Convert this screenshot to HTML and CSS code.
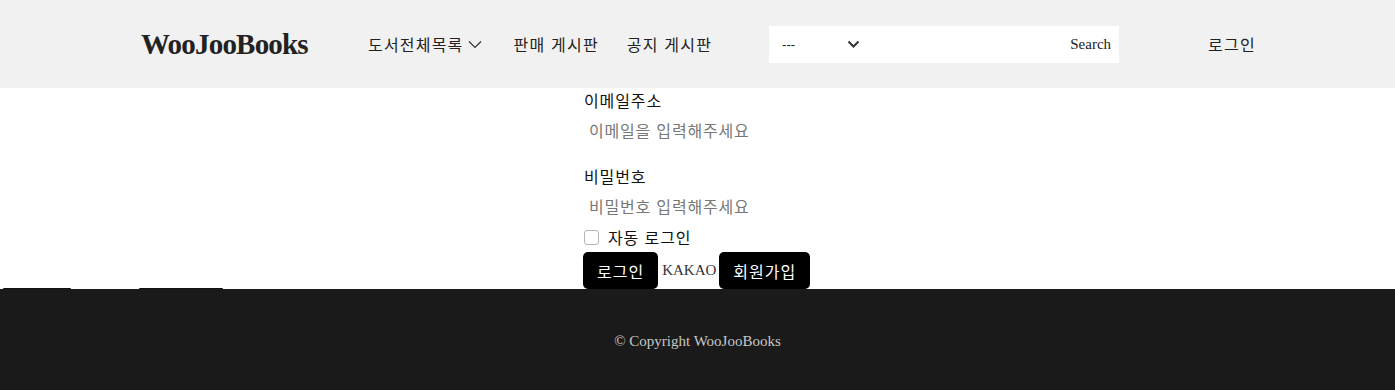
FILE: index.html
```html
<!DOCTYPE html>
<html lang="ko">
<head>
<meta charset="utf-8">
<title>WooJooBooks</title>
<link rel="stylesheet" href="styles.css">
</head>
<body>
<header class="header">
  <a class="logo" href="#">WooJooBooks</a>
  <nav class="nav">
    <a class="nav-item" href="#">도서전체목록
      <svg class="nav-chev" width="14" height="9" viewBox="0 0 14 9"><path d="M1 1.5 L7 7.5 L13 1.5" fill="none" stroke="#333" stroke-width="1.2"/></svg>
    </a>
    <a class="nav-item" href="#">판매 게시판</a>
    <a class="nav-item" href="#">공지 게시판</a>
  </nav>
  <form class="search">
    <div class="search-select">
      <span>---</span>
      <svg width="13" height="9" viewBox="0 0 13 9"><path d="M1.5 1.5 L6.5 6.5 L11.5 1.5" fill="none" stroke="#333" stroke-width="2"/></svg>
    </div>
    <input class="search-input" type="text">
    <button class="search-btn" type="button">Search</button>
  </form>
  <a class="login-link" href="#">로그인</a>
</header>

<main class="main">
  <form class="login-form">
    <label class="field-label">이메일주소</label>
    <input class="field-input" type="text" placeholder="이메일을 입력해주세요">
    <label class="field-label second">비밀번호</label>
    <input class="field-input" type="password" placeholder="비밀번호 입력해주세요">
    <label class="remember"><span class="check"></span>자동 로그인</label>
    <div class="actions">
      <button class="btn" type="button">로그인</button>
      <span class="kakao">KAKAO</span>
      <button class="btn" type="button">회원가입</button>
    </div>
  </form>
</main>
<div class="stray">
  <span class="stray-a"></span>
  <span class="stray-b"></span>
</div>

<footer class="footer">
  <p>© Copyright WooJooBooks</p>
</footer>
</body>
</html>
```

FILE: styles.css
```css
* { box-sizing: border-box; }
html, body { margin: 0; padding: 0; }
body {
  font-family: "Noto Sans CJK KR", "Noto Sans", sans-serif;
  color: #222;
  background: #fff;
  width: 1395px;
  height: 390px;
  overflow: hidden;
}
a { color: inherit; text-decoration: none; }

.header {
  height: 88px;
  background: #f1f1f1;
  display: flex;
  align-items: center;
  padding-left: 141px;
}
.logo {
  font-family: "Liberation Serif", serif;
  font-weight: bold;
  font-size: 29px;
  color: #222;
  letter-spacing: -0.8px;
  width: 167px;
  white-space: nowrap;
}
.nav {
  display: flex;
  align-items: center;
  margin-left: 60px;
  font-size: 16px;
  letter-spacing: 1.2px;
  color: #222;
}
.nav-item { display: flex; align-items: center; line-height: 24px; }
.nav-item + .nav-item { margin-left: 28px; }
.nav-item:nth-child(2) { margin-left: 32px; }
.nav-chev { margin-left: 4px; margin-top: 1px; }

.search {
  margin-left: 57px;
  width: 350px;
  height: 37px;
  background: #fff;
  display: flex;
  align-items: center;
}
.search-select {
  width: 91px;
  display: flex;
  align-items: center;
  justify-content: space-between;
  padding-left: 13px;
  font-family: "Liberation Sans", sans-serif;
  font-size: 13px;
  color: #222;
}
.search-input {
  flex: 1;
  border: 0;
  outline: none;
  background: transparent;
  height: 37px;
}
.search-btn {
  border: 0;
  background: transparent;
  font-family: "Liberation Serif", serif;
  font-size: 15px;
  color: #222;
  padding: 0 8px 0 0;
  cursor: pointer;
}
.login-link {
  margin-left: 89px;
  font-size: 16px;
  letter-spacing: 1.2px;
  color: #222;
}

.main {
  height: 201px;
  display: flex;
  justify-content: center;
}
.login-form {
  width: 228px;
  margin-left: 1px;
  display: flex;
  flex-direction: column;
  align-items: flex-start;
  letter-spacing: 0.9px;
}
.field-label {
  font-size: 16px;
  line-height: 24px;
  color: #111;
}
.field-label.second { margin-top: 19px; }
.field-input {
  border: 0;
  outline: none;
  height: 30px;
  margin-top: 3px;
  padding: 0 5px;
  font-family: "Noto Sans CJK KR", sans-serif;
  font-size: 16px;
  letter-spacing: 0.8px;
  width: 228px;
  background: transparent;
}
.field-input::placeholder { color: #777; }
.remember {
  display: flex;
  align-items: center;
  height: 20px;
  margin-top: 6px;
  font-size: 16px;
  color: #111;
}
.check {
  width: 15px;
  height: 15px;
  border: 1px solid #b5b5b5;
  border-radius: 3px;
  margin-right: 9px;
  background: #fff;
}
.actions {
  display: flex;
  align-items: center;
  margin-top: 5px;
  margin-left: -1px;
}
.btn {
  background: #000;
  color: #fff;
  border: 0;
  border-radius: 5px;
  height: 37px;
  padding: 0 14px;
  font-family: "Noto Sans CJK KR", sans-serif;
  font-size: 16px;
  letter-spacing: 1px;
}
.kakao {
  font-family: "Liberation Serif", serif;
  font-size: 15px;
  letter-spacing: 0;
  color: #333;
  margin: 0 3px 0 4px;
}

.stray {
  height: 1px;
  margin-top: -1px;
  display: flex;
}
.stray span { height: 1px; background: #111; border-radius: 1px 1px 0 0; }
.stray-a { width: 68px; margin-left: 3px; }
.stray-b { width: 84px; margin-left: 68px; }

.footer {
  height: 101px;
  background: #1a1a1a;
  display: flex;
  align-items: center;
  justify-content: center;
}
.footer p {
  margin: 0;
  font-family: "Liberation Serif", serif;
  font-size: 15px;
  color: #c8c8c8;
  padding-top: 3px;
}
```
